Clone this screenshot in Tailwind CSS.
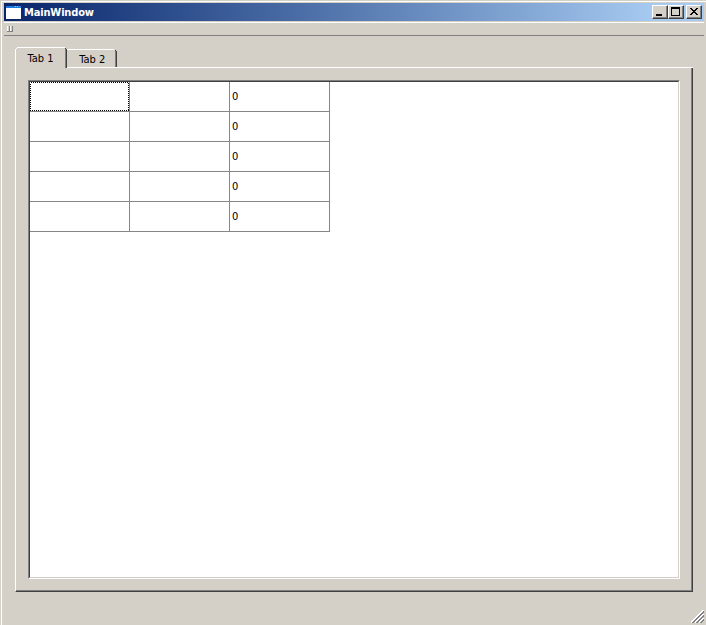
<!DOCTYPE html>
<html lang="en">
<head>
<meta charset="utf-8">
<title>MainWindow</title>
<script src="https://cdn.jsdelivr.net/npm/@tailwindcss/browser@4"></script>
</head>
<body class="w-[706px] h-[625px] overflow-hidden bg-[#d4d0c8] pt-px pl-px font-['DejaVu_Sans_Condensed','DejaVu_Sans',sans-serif] font-stretch-condensed text-[11px] leading-none text-black">
<main class="flex flex-col w-[705px] h-[624px] border-t border-l border-white pl-[2px] pt-px">
  <header class="flex items-center w-[700px] h-[18px] bg-linear-to-r from-[#0a246a] to-[#a6caf0] to-93% pl-[2px] pr-[2px]">
    <svg class="w-[15px] h-[13px] shrink-0" viewBox="0 0 15 13" shape-rendering="crispEdges">
      <rect width="15" height="13" fill="#fff"/><rect width="15" height="2" fill="#1f7be0"/><path d="M9 0h1v1H9zM11 0h1v1h-1z" fill="#9cf"/><path d="M13 0h1v1h-1z" fill="#e0603a"/>
    </svg>
    <h1 class="ml-[3px] font-bold text-white flex-1 tracking-[-0.15px]">MainWindow</h1>
    <div class="flex">
      <button class="w-[16px] h-[14px] bg-[#d4d0c8] border border-t-white border-l-white border-r-[#404040] border-b-[#404040] shadow-[inset_-1px_-1px_#808080]"><svg class="w-[14px] h-[12px] block" viewBox="0 0 14 12" shape-rendering="crispEdges"><path d="M3 8h6v2H3z"/></svg></button>
      <button class="w-[16px] h-[14px] bg-[#d4d0c8] border border-t-white border-l-white border-r-[#404040] border-b-[#404040] shadow-[inset_-1px_-1px_#808080]"><svg class="w-[14px] h-[12px] block" viewBox="0 0 14 12" shape-rendering="crispEdges"><path fill-rule="evenodd" d="M2 1h9v9H2zM3 3v6h7V3z"/></svg></button>
      <button class="ml-[2px] w-[16px] h-[14px] bg-[#d4d0c8] border border-t-white border-l-white border-r-[#404040] border-b-[#404040] shadow-[inset_-1px_-1px_#808080]"><svg class="w-[14px] h-[12px] block" viewBox="0 0 14 12" shape-rendering="crispEdges"><path d="M3 2h2v1h1v1h2V3h1V2h2v1h-1v1H9v1H8v1h1v1h1v1h1v1H9V8H8V7H6v1H5v1H3V8h1V7h1V6h1V5H5V4H4V3H3z"/></svg></button>
    </div>
  </header>
  <div class="mt-px w-[700px] h-[14px] border-t border-t-white border-b border-b-[#808080] pt-[3px] pl-[3px]">
    <svg class="block w-[7px] h-[7px]" viewBox="0 0 7 7" shape-rendering="crispEdges"><path fill="#fff" d="M0 0h1v6H0zM3 0h1v6H3z"/><path fill="#808080" d="M2 0h1v6H0v-1h2zM5 0h1v6H3v-1h2z"/></svg>
  </div>
  <nav class="flex items-end mt-[11px] ml-[11px] h-[21px]">
    <svg class="block w-[102px] h-[21px]" viewBox="0 0 102 21" shape-rendering="crispEdges">
      <path fill="#fff" d="M0 2h1v19H0zM1 1h1v1H1zM2 0h48v1H2zM52 2h47v1H52z"/>
      <path fill="#808080" d="M50 2h1v19h-1zM100 4h1v16h-1z"/><path fill="#404040" d="M50 1h1v1h-1zM51 2h1v19h-1zM100 3h1v1h-1zM101 4h1v16h-1z"/>
      <path fill="#fff" d="M52 20h50v1H52z"/>
      <text x="12.5" y="15">Tab 1</text><text x="64.3" y="16">Tab 2</text>
    </svg>
    <div class="w-[576px] h-px bg-white"></div>
  </nav>
  <section class="ml-[11px] w-[678px] h-[524px] border-l border-l-white border-r border-b border-r-[#404040] border-b-[#404040] shadow-[inset_-1px_-1px_#808080] pt-[12px] pl-[12px]">
    <div class="w-[652px] h-[499px] border border-t-[#808080] border-l-[#808080] border-r-white border-b-white">
      <div class="w-[650px] h-[497px] border border-t-[#404040] border-l-[#404040] border-r-[#d4d0c8] border-b-[#d4d0c8] bg-white">
        <div id="grid" class="grid grid-cols-[100px_100px_100px] auto-rows-[30px] w-[300px]"></div>
      </div>
    </div>
  </section>
  <footer class="flex-1 flex items-end justify-end pr-[2px] pb-[2px]">
    <svg class="block w-[13px] h-[13px]" viewBox="0 0 13 13" shape-rendering="crispEdges"><path stroke="#fff" stroke-width="1.2" d="M0 12.5L12.5 0M4 12.5L12.5 4M8 12.5L12.5 8"/><path stroke="#808080" stroke-width="1.8" d="M1.5 13L13 1.5M5.5 13L13 5.5M9.5 13L13 9.5"/></svg>
  </footer>
</main>
<script>
const grid = document.getElementById('grid');
for (let i = 0; i < 15; i++) {
  const cell = document.createElement('div');
  cell.className = 'border-r border-b border-[#868684] flex items-center pl-[2px]';
  if (i % 3 === 2) cell.textContent = '0';
  if (i === 0) {
    cell.className = 'border-r border-b border-[#868684]';
    cell.innerHTML = '<svg class="block w-[99px] h-[29px]" viewBox="0 0 99 29" shape-rendering="crispEdges"><rect x=".5" y=".5" width="98" height="28" fill="none" stroke="#000" stroke-dasharray="1 1"/></svg>';
  }
  grid.append(cell);
}
</script>
</body>
</html>
